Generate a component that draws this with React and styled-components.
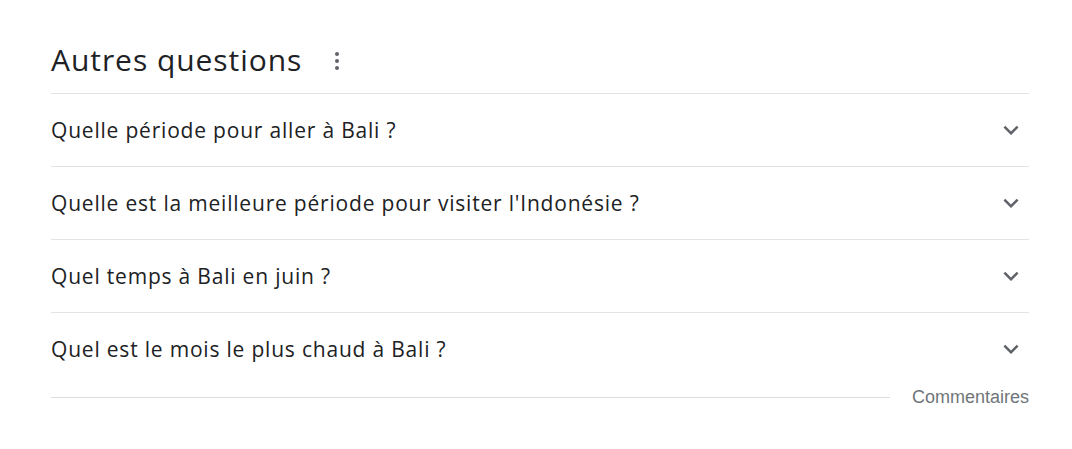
import React from 'react';
import styled, { createGlobalStyle } from 'styled-components';

const GlobalStyle = createGlobalStyle`
	body {
		margin: 0;
		background: #fff;
		font-family: 'Open Sans', Arial, sans-serif;
	}
`;

const Wrapper = styled.div`
	width: 978px;
	margin-left: 51px;
`;

const Header = styled.div`
	display: flex;
	align-items: center;
	gap: 33px;
	padding: 42px 0 15px;
	border-bottom: 1px solid #e3e3e3;

	h2 {
		margin: 0;
		font-size: 30px;
		line-height: 36px;
		font-weight: 400;
		letter-spacing: 0.95px;
		color: #202124;
	}
`;

const Dots = styled.span`
	display: flex;
	flex-direction: column;
	gap: 3px;
	padding-top: 2px;

	i {
		width: 4px;
		height: 4px;
		border-radius: 50%;
		background: #5f6368;
	}
`;

const List = styled.div`
	display: flex;
	flex-direction: column;
`;

const Row = styled.div`
	display: flex;
	align-items: center;
	justify-content: space-between;
	height: 72px;
	border-bottom: ${(props) => (props.$last ? 'none' : '1px solid #e3e3e3')};
	font-size: 21px;
	letter-spacing: 0.8px;
	color: #202124;
`;

const Chevron = styled.svg`
	width: 30px;
	height: 30px;
	margin-right: 3px;
	fill: #5f6368;
`;

const Footer = styled.div`
	display: flex;
	align-items: center;
	gap: 22px;
	height: 24px;
	font-family: 'Liberation Sans', Arial, sans-serif;
	font-size: 18px;
	color: #70757a;

	&::before {
		content: '';
		flex: 1;
		border-top: 1px solid #dadce0;
	}
`;

const questions = [
	'Quelle période pour aller à Bali ?',
	"Quelle est la meilleure période pour visiter l'Indonésie ?",
	'Quel temps à Bali en juin ?',
	'Quel est le mois le plus chaud à Bali ?',
];

const App = () => {
	return (
		<>
			<GlobalStyle />
			<Wrapper>
				<Header>
					<h2>Autres questions</h2>
					<Dots>
						<i />
						<i />
						<i />
					</Dots>
				</Header>
				<List>
					{questions.map((q, i) => (
						<Row key={q} $last={i === questions.length - 1}>
							<span>{q}</span>
							<Chevron viewBox="0 0 24 24">
								<path d="M16.59 8.59 12 13.17 7.41 8.59 6 10l6 6 6-6z" />
							</Chevron>
						</Row>
					))}
				</List>
				<Footer>Commentaires</Footer>
			</Wrapper>
		</>
	);
};

export default App;
